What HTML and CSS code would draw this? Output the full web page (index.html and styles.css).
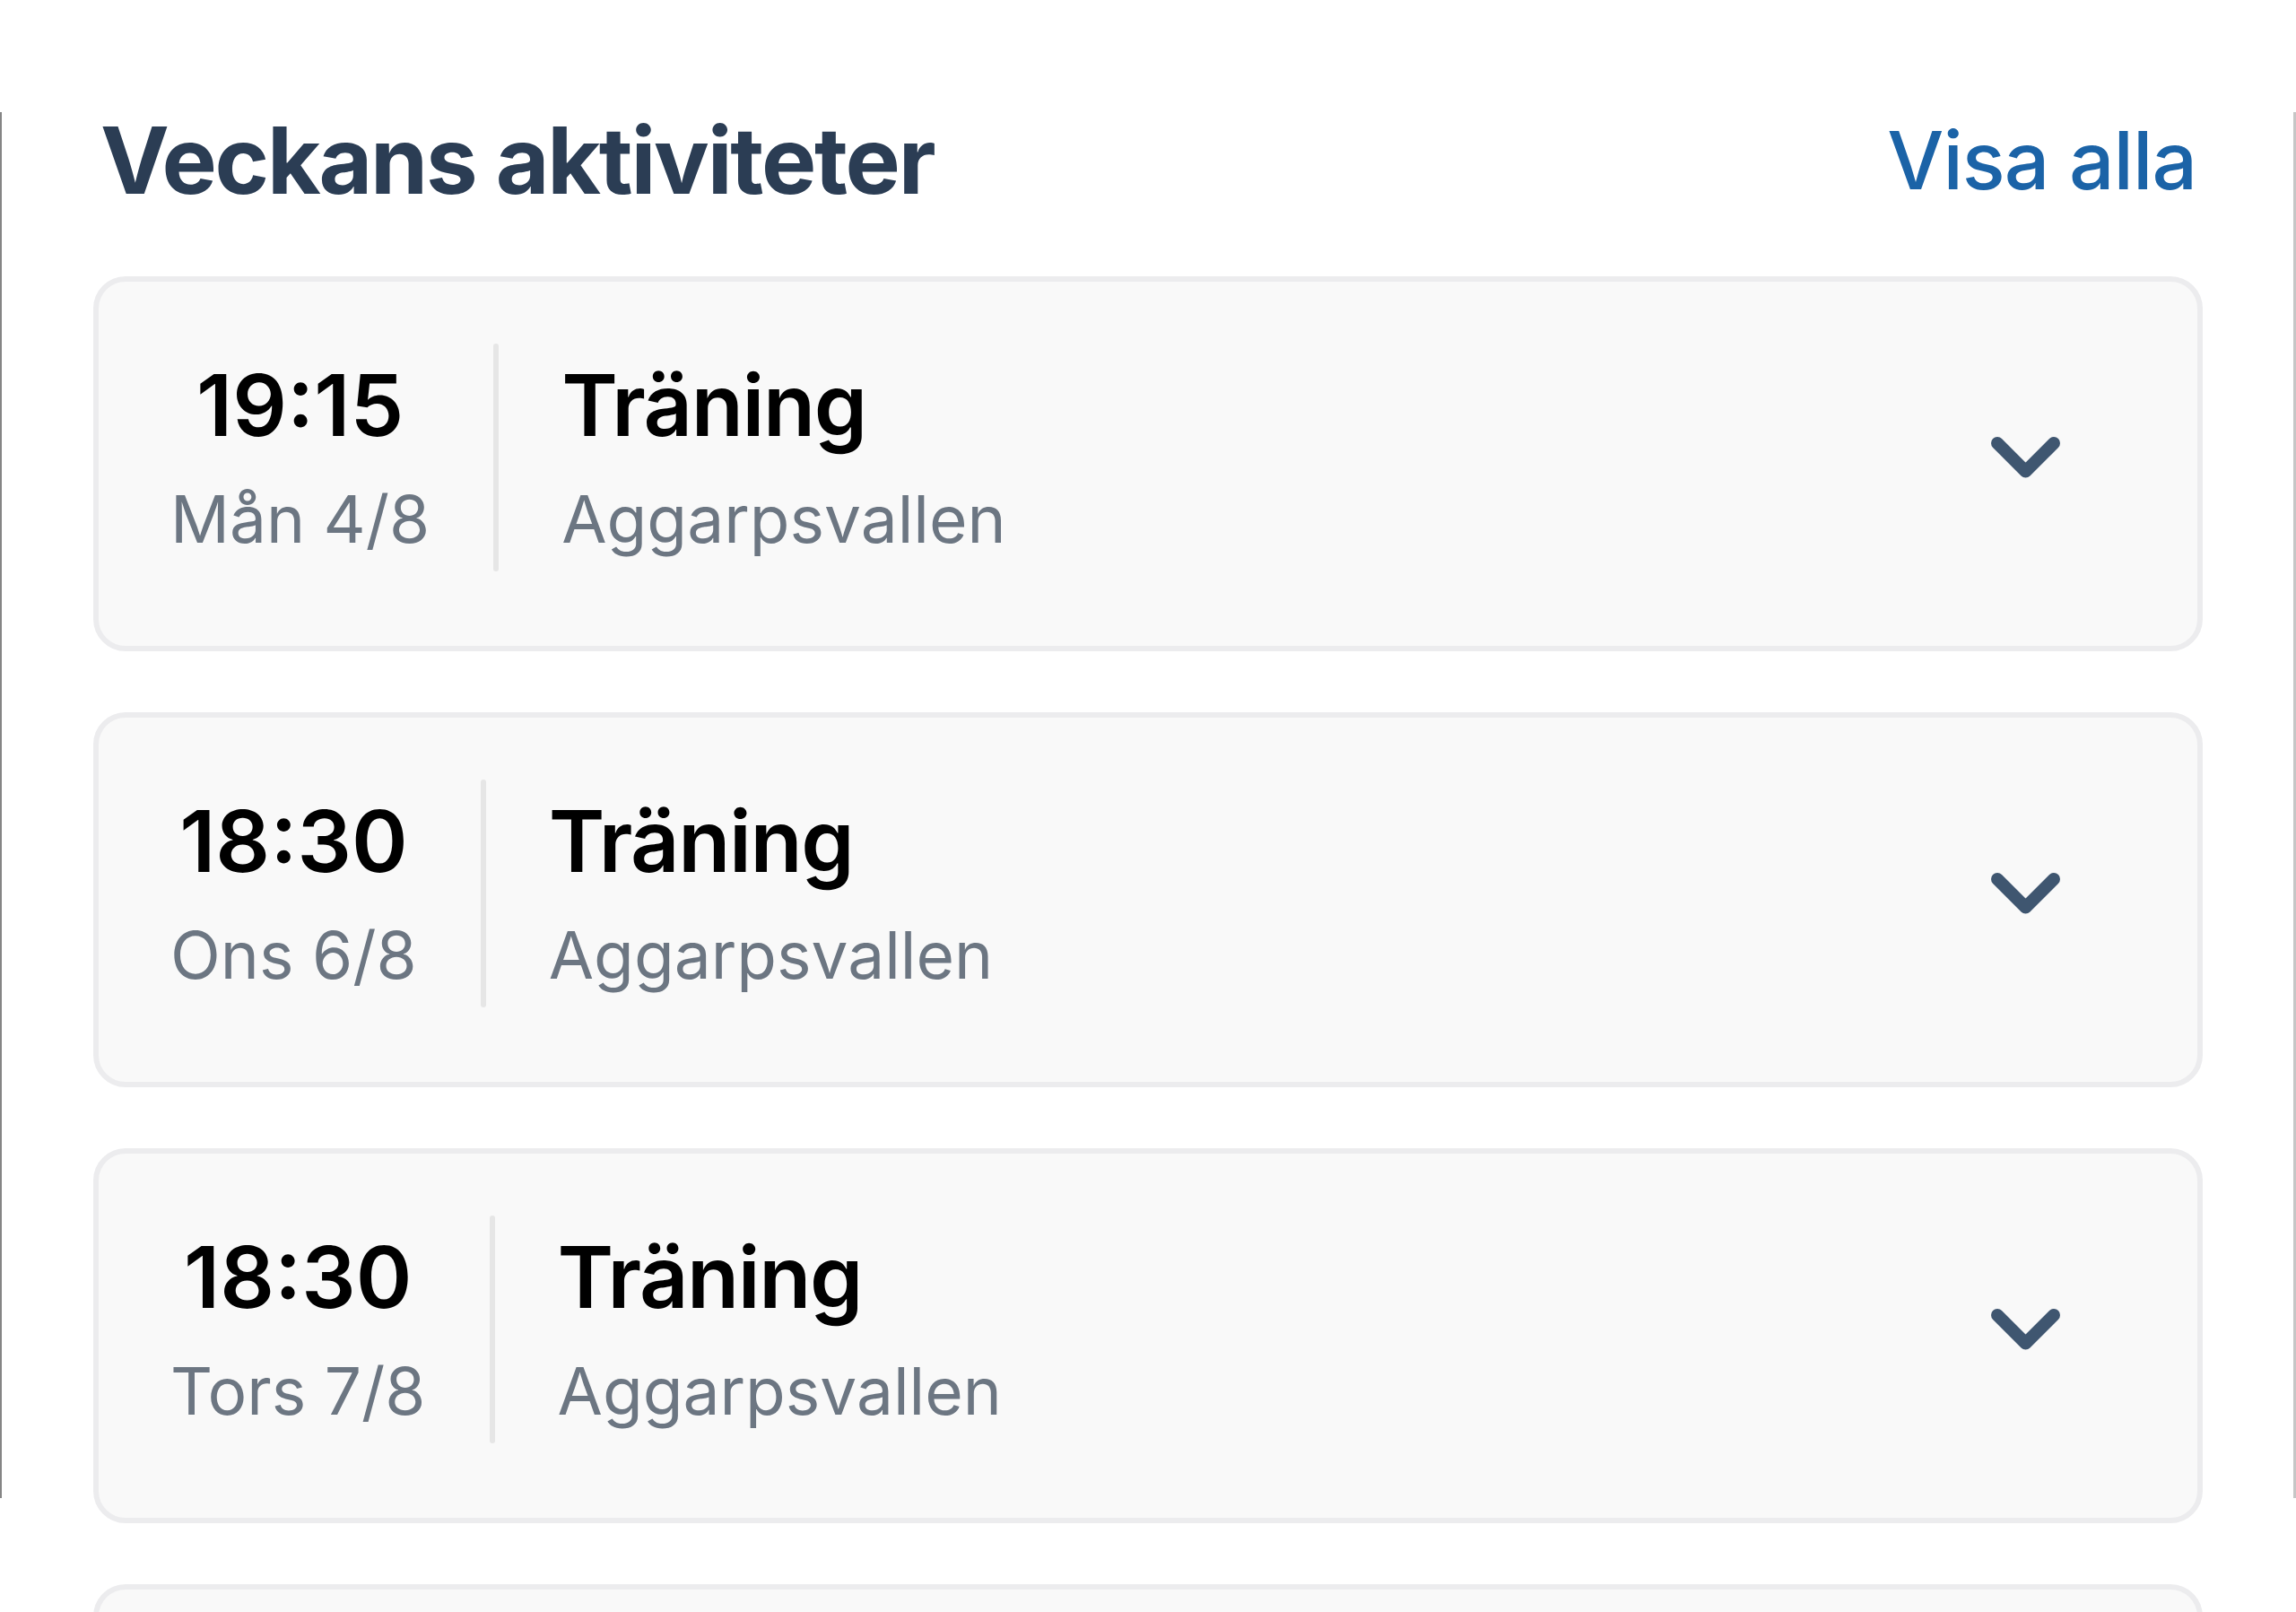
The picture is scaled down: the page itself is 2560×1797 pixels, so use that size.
FILE: index.html
```html
<!DOCTYPE html>
<html lang="sv">
<head>
<meta charset="utf-8">
<title>Veckans aktiviteter</title>
<link rel="stylesheet" href="styles.css">
</head>
<body>
<div class="frame" aria-hidden="true"></div>
<section class="activities">
  <header class="activities-header">
    <h2 class="activities-title">Veckans aktiviteter</h2>
    <a class="show-all" href="#">Visa alla</a>
  </header>
  <ul class="activity-list">
    <li class="activity-card">
      <div class="when">
        <div class="time">19:15</div>
        <div class="date">Mån 4/8</div>
      </div>
      <div class="divider"></div>
      <div class="what">
        <div class="title">Träning</div>
        <div class="place">Aggarpsvallen</div>
      </div>
      <svg class="chevron" width="77" height="46" viewBox="0 0 77 46"><path d="M7 7 L38.5 38.5 L70 7" fill="none" stroke="#3f5670" stroke-width="14" stroke-linecap="round" stroke-linejoin="round"/></svg>
    </li>
    <li class="activity-card">
      <div class="when">
        <div class="time">18:30</div>
        <div class="date">Ons 6/8</div>
      </div>
      <div class="divider"></div>
      <div class="what">
        <div class="title">Träning</div>
        <div class="place">Aggarpsvallen</div>
      </div>
      <svg class="chevron" width="77" height="46" viewBox="0 0 77 46"><path d="M7 7 L38.5 38.5 L70 7" fill="none" stroke="#3f5670" stroke-width="14" stroke-linecap="round" stroke-linejoin="round"/></svg>
    </li>
    <li class="activity-card">
      <div class="when">
        <div class="time">18:30</div>
        <div class="date">Tors 7/8</div>
      </div>
      <div class="divider"></div>
      <div class="what">
        <div class="title">Träning</div>
        <div class="place">Aggarpsvallen</div>
      </div>
      <svg class="chevron" width="77" height="46" viewBox="0 0 77 46"><path d="M7 7 L38.5 38.5 L70 7" fill="none" stroke="#3f5670" stroke-width="14" stroke-linecap="round" stroke-linejoin="round"/></svg>
    </li>
    <li class="activity-card">
      <div class="when">
        <div class="time">18:30</div>
        <div class="date">Fre 8/8</div>
      </div>
      <div class="divider"></div>
      <div class="what">
        <div class="title">Träning</div>
        <div class="place">Aggarpsvallen</div>
      </div>
      <svg class="chevron" width="77" height="46" viewBox="0 0 77 46"><path d="M7 7 L38.5 38.5 L70 7" fill="none" stroke="#3f5670" stroke-width="14" stroke-linecap="round" stroke-linejoin="round"/></svg>
    </li>
  </ul>
</section>
</body>
</html>
```

FILE: styles.css
```css
html, body {
  margin: 0;
  padding: 0;
  background: #ffffff;
}

body {
  position: relative;
  font-family: Inter, "Noto Sans", "Liberation Sans", sans-serif;
  color: #000;
}

.frame {
  position: absolute;
  top: 125px;
  left: 0;
  right: 0;
  height: 1545px;
  border-left: 2px solid #858585;
  border-right: 3px solid #c6c6c6;
  pointer-events: none;
}

.activities {
  padding: 127px 104px 0 104px;
}

.activities-header {
  display: flex;
  align-items: center;
  justify-content: space-between;
  padding: 0 7px 0 8px;
}

.activities-title {
  margin: 0;
  font-size: 103px;
  line-height: 1;
  font-weight: 700;
  color: #2b3d54;
  letter-spacing: -2.2px;
}

.show-all {
  font-size: 89px;
  line-height: 1;
  font-weight: 500;
  color: #1b63a7;
  text-decoration: none;
  letter-spacing: -1px;
}

.activity-list {
  list-style: none;
  margin: 78px 0 0;
  padding: 0;
  display: flex;
  flex-direction: column;
  gap: 68px;
}

.activity-card {
  display: flex;
  align-items: center;
  background: #f9f9f9;
  border: 6px solid #ececee;
  border-radius: 36px;
  padding: 69px 153px 83px 80px;
}

.when {
  display: flex;
  flex-direction: column;
  align-items: center;
}

.time, .title {
  font-size: 95px;
  line-height: 137px;
  font-weight: 600;
  color: #000;
}

.title {
  letter-spacing: -1.4px;
}

.date, .place {
  font-size: 73px;
  line-height: 117px;
  font-weight: 400;
  color: #6c7682;
}

.divider {
  align-self: stretch;
  width: 6px;
  border-radius: 3px;
  background: #e6e6e6;
  margin: 0 70px 0 71px;
}

.what {
  flex: 1;
  display: flex;
  flex-direction: column;
}

.chevron {
  flex: none;
  display: block;
}
```
